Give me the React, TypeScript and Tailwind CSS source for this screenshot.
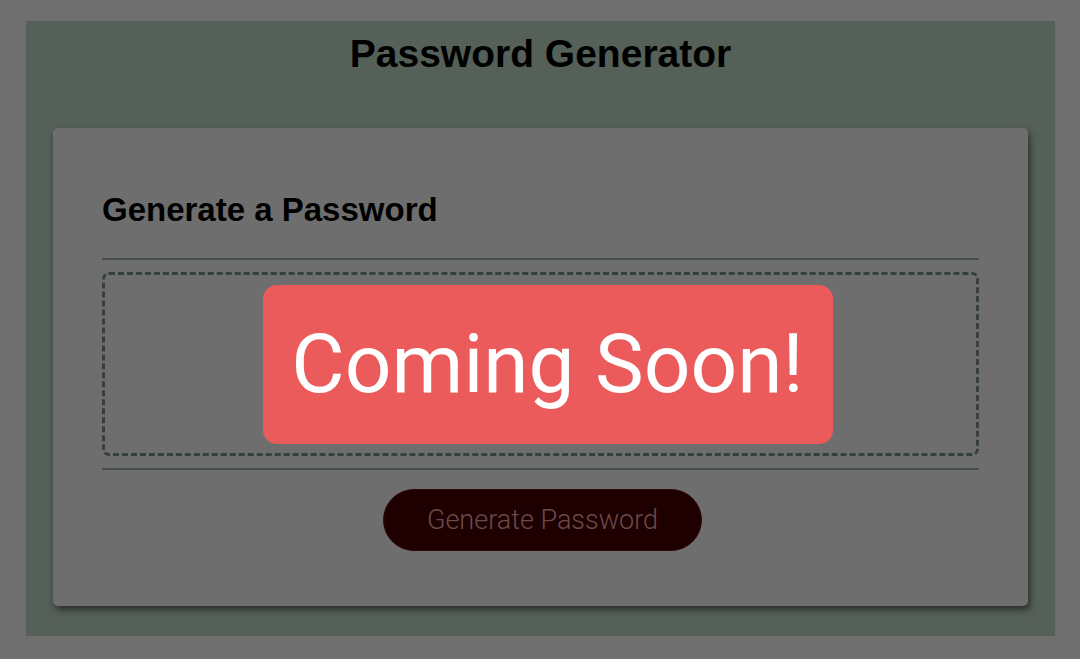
import React from "react";

export default function App() {
  return (
    <div className="w-[1080px] h-[659px] bg-[#6f6f6f] pt-[21px] pl-[26px] pr-[25px] pb-[23px]">
      <div className="h-full bg-[#556059] flex flex-col px-[27px] pb-[30px]">
        <h1
          className="text-center text-[39px] font-bold text-black h-[107px] pt-[12px] leading-[42px]"
          style={{ fontFamily: '"Liberation Sans", Arial, sans-serif' }}
        >
          Password Generator
        </h1>
        <div className="flex-1 bg-[#6e6e6e] rounded-[5px] shadow-[2px_4px_7px_rgba(0,0,0,0.5)] px-[49px] pt-[62px] flex flex-col">
          <h2
            className="text-[33px] font-bold text-black leading-[40px] h-[68px]"
            style={{ fontFamily: '"Liberation Sans", Arial, sans-serif' }}
          >
            Generate a Password
          </h2>
          <div className="h-[2px] bg-[#48504c]" />
          <div className="mt-[12px] h-[184px] border-[3px] border-dashed border-[#37413c] rounded-[7px] flex items-center justify-center">
            <div
              className="ml-[14px] w-[570px] h-[159px] bg-[#eb5b5c] rounded-[14px] flex items-center justify-center text-white text-[82px]"
              style={{ fontFamily: 'Roboto, "Noto Sans", sans-serif' }}
            >
              Coming Soon!
            </div>
          </div>
          <div className="mt-[12px] h-[2px] bg-[#48504c]" />
          <div className="flex justify-center mt-[19px]">
            <button
              className="ml-[4px] w-[319px] h-[62px] rounded-full bg-[#1e0000] text-[#6a4a4a] text-[27px] font-light border border-[#2e0808]"
              style={{ fontFamily: 'Roboto, "Noto Sans", sans-serif' }}
            >
              Generate Password
            </button>
          </div>
        </div>
      </div>
    </div>
  );
}
